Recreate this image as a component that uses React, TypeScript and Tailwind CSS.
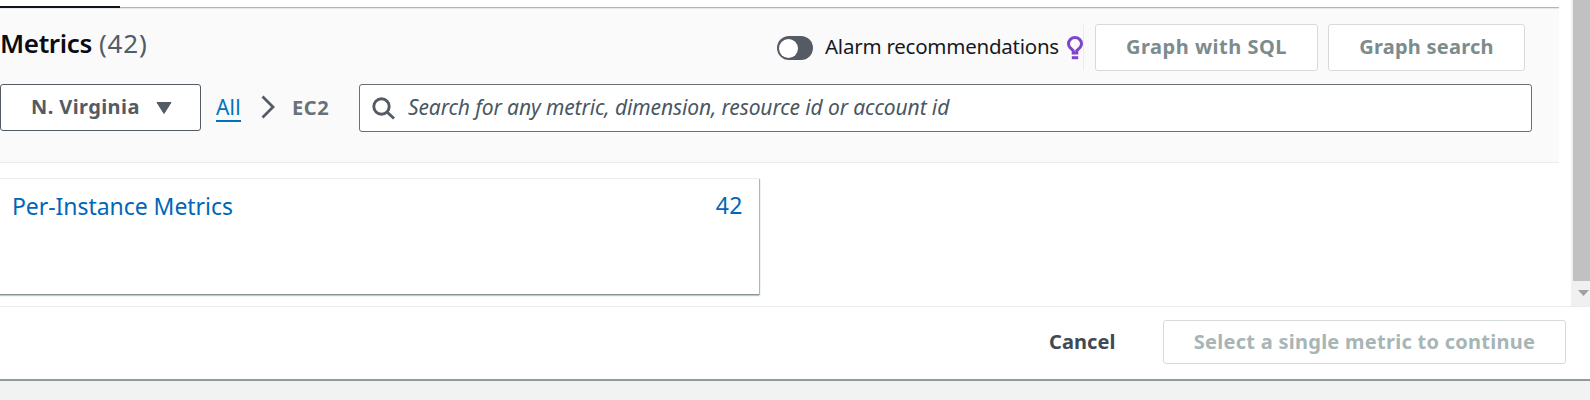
import React from "react";

function Toggle() {
  return (
    <span className="flex h-6 w-9 items-center rounded-full bg-[#545b64] pl-[2px]">
      <span className="h-[19px] w-[19px] rounded-full bg-white" />
    </span>
  );
}

function Bulb() {
  return (
    <svg width="16" height="24" viewBox="0 0 16 24" fill="none" className="block shrink-0">
      <path
        d="M6.2 17V14.6L3 11.6C2 10.3 1.5 9.2 1.5 7.8C1.5 4.2 4.4 1.5 8 1.5C11.6 1.5 14.5 4.2 14.5 7.8C14.5 9.2 14 10.3 13 11.6L9.8 14.6V17Z"
        stroke="#7d45cc"
        strokeWidth="3"
      />
      <path d="M4.8 21.7H11.2" stroke="#7d45cc" strokeWidth="3" />
    </svg>
  );
}

function Header() {
  return (
    <div className="flex h-[75px] items-start">
      <h2 className="flex w-[777px] pt-[16px] text-[26px] leading-[36px] whitespace-pre">
        <span className="w-[99px] font-semibold tracking-[-0.35px] text-[#0a0c12]">Metrics</span>
        <span className="tracking-[0.8px] text-[#545b64]">(42)</span>
      </h2>
      <div className="flex w-[307px] items-start pt-[27px]">
        <Toggle />
        <span className="-mt-[6px] ml-3 w-[242px] text-[20.5px] leading-[32px] tracking-[-0.24px] whitespace-nowrap text-[#16191f]">
          Alarm recommendations
        </span>
        <Bulb />
      </div>
      <div className="mt-4 -ml-px h-[45px] w-px bg-[#eaeded]" />
      <div className="mt-[15px] ml-[11px] flex gap-[10px] text-[20px] leading-[43px] font-bold whitespace-nowrap text-[#7c8c8d]">
        <button className="flex h-[47px] w-[223px] justify-center rounded-[3px] border border-[#d5dbdb] bg-white tracking-[0.5px]">
          Graph with SQL
        </button>
        <button className="flex h-[47px] w-[197px] justify-center rounded-[3px] border border-[#d5dbdb] bg-white tracking-[0.25px]">
          Graph search
        </button>
      </div>
    </div>
  );
}

function Toolbar() {
  return (
    <div className="flex h-12 items-start">
      <button className="flex h-[47px] w-[201px] items-start rounded-[3px] border border-[#545b64] bg-white pl-[30px] text-[#545b64]">
        <span className="w-[125px] text-left text-[20px] leading-[43px] font-bold tracking-[0.4px]">N. Virginia</span>
        <svg width="16" height="13" viewBox="0 0 16 13" className="mt-[17px] block">
          <path d="M1 0.5H15L8 11.5Z" fill="#545b64" stroke="#545b64" strokeLinejoin="round" />
        </svg>
      </button>
      <nav className="flex w-[158px] items-start pl-[15px] leading-[30px]">
        <a className="mt-[8px] h-[30px] w-[25px] border-b-2 border-[#0073bb] text-[21px] tracking-[0.2px] text-[#0073bb]">
          All
        </a>
        <svg width="14" height="24" viewBox="0 0 14 24" fill="none" className="mt-[11px] ml-5 block">
          <path d="M1.5 1.5L12 12L1.5 22.5" stroke="#545b64" strokeWidth="2.8" />
        </svg>
        <span className="mt-[9px] ml-[17px] text-[20px] font-bold tracking-[0.6px] text-[#687078]">EC2</span>
      </nav>
      <div className="flex h-12 w-[1173px] items-start rounded-[3px] border border-[#687078] bg-white pl-3">
        <svg width="24" height="24" viewBox="0 0 24 24" fill="none" className="mt-3 block">
          <circle cx="9.5" cy="9.5" r="7.7" stroke="#545b64" strokeWidth="2.9" />
          <path d="M15 15L22 21.5" stroke="#545b64" strokeWidth="3" />
        </svg>
        <span className="ml-3 text-[21px] leading-[44px] tracking-[-0.12px] whitespace-pre text-[#4a5763] italic">
          Search for any metric, dimension, resource id or account id
        </span>
      </div>
    </div>
  );
}

export default function App() {
  return (
    <div className="flex h-[400px] w-[1590px] flex-col overflow-hidden bg-[#f1f3f3] font-['Noto_Sans','Open_Sans',sans-serif]">
      <div className="flex h-[306px] bg-white">
        <div className="w-[1559px]">
          <div className="flex h-[9px] flex-col justify-end">
            <div className="h-[2px] w-[120px] bg-[#10121a]" />
            <div className="-mt-px ml-[120px] h-px bg-[#aab7b8]" />
            <div className="h-px bg-[#e4e8e8]" />
          </div>
          <div className="h-[154px] border-b border-[#eaeded] bg-[#fafafa]">
            <Header />
            <Toolbar />
          </div>
          <div className="mt-[15px] flex h-[116px] w-[759px] justify-between border-t border-[#eaeded] bg-white pr-[16px] pl-[12px] text-[23px] leading-[32px] text-[#0067b8] shadow-[0_1px_0_0_#879596,1px_1px_1px_0_#aab7b8,0_2px_1px_0_#c3cccc]">
            <span className="pt-[11px] tracking-[-0.05px]">Per-Instance Metrics</span>
            <span className="pt-[10px] tracking-[0.5px]">42</span>
          </div>
        </div>
        <div className="ml-3 flex w-[19px] flex-col bg-[#f0f0f0] pl-[2px]">
          <div className="h-[281px] bg-[#c1c1c1]" />
          <svg width="12" height="7" viewBox="0 0 12 7" className="mt-[9px] ml-[5px] block">
            <path d="M0 0H11L5.5 6Z" fill="#a0a0a0" />
          </svg>
        </div>
      </div>
      <footer className="flex h-[75px] items-start border-t border-b-2 border-t-[#eaeded] border-b-[#8f9b9c] bg-white pl-[1049px] text-[20px] font-bold">
        <button className="mt-[19px] w-[114px] text-left leading-[32px] tracking-[0.1px] text-[#414956]">Cancel</button>
        <button className="mt-[13px] flex h-[44px] w-[403px] justify-center rounded-[3px] border border-[#d5dbdb] leading-[42px] tracking-[0.27px] whitespace-nowrap text-[#a7b5b6]">
          Select a single metric to continue
        </button>
      </footer>
    </div>
  );
}
